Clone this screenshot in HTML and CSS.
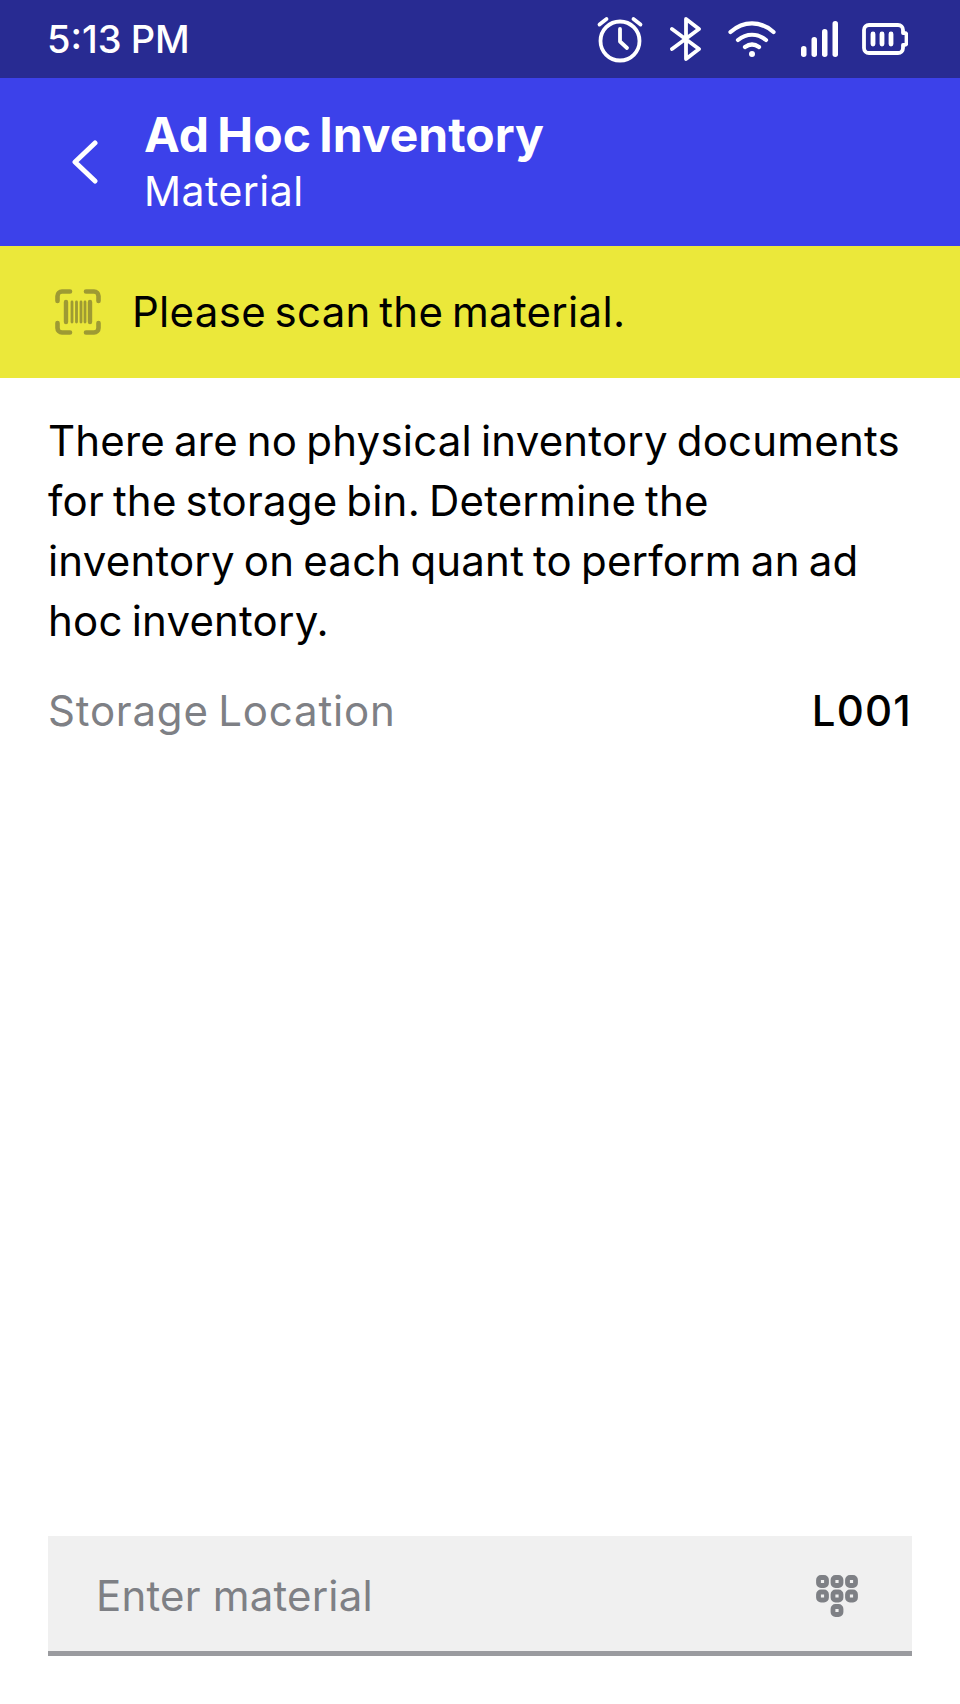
FILE: index.html
```html
<!DOCTYPE html>
<html lang="en">
<head>
    <meta charset="UTF-8">
    <meta name="viewport" content="width=device-width, initial-scale=1.0">
    <title>Ad Hoc Inventory - Material</title>
    <link rel="stylesheet" href="styles.css">
</head>
<body>

<div class="screen">
    <div class="status-bar">
        <span class="time">5:13 PM</span>
        <div class="status-icons">
            <!-- alarm -->
            <svg class="ic-alarm" width="48" height="48" viewBox="0 0 48 48" fill="none" stroke="#fff" stroke-width="3.800" stroke-linecap="round" stroke-linejoin="round">
                <circle cx="24" cy="26" r="19.500"/>
                <path d="M24 14v12.500l7 6.500M3.500 9.500l7-5.500M44.500 9.500l-7-5.500"/>
            </svg>
            <!-- bluetooth -->
            <svg class="ic-bt" width="32" height="44" viewBox="0 0 32 44" fill="none" stroke="#fff" stroke-width="3.800" stroke-linecap="round" stroke-linejoin="round">
                <path d="M2 12l27 20-13 10V2l13 10L2 32"/>
            </svg>
            <!-- wifi -->
            <svg class="ic-wifi" width="48" height="36" viewBox="0 0 48 36" fill="none" stroke="#fff" stroke-width="4.200" stroke-linecap="round">
                <path d="M2.500 11c13-11.500 30-11.500 43 0M10 19c8.500-7 19.500-7 28 0M17 26c4.500-3.200 9.500-3.200 14 0"/>
                <circle cx="24" cy="33" r="3" fill="#fff" stroke="none"/>
            </svg>
            <!-- signal -->
            <svg class="ic-signal" width="37" height="36" viewBox="0 0 37 36" fill="#fff">
                <rect x="0" y="25" width="5.500" height="11" rx="2.700"/>
                <rect x="10.500" y="16" width="5.500" height="20" rx="2.700"/>
                <rect x="21" y="8" width="5.500" height="28" rx="2.700"/>
                <rect x="31.500" y="0" width="5.500" height="36" rx="2.700"/>
            </svg>
            <!-- battery -->
            <svg class="ic-battery" width="46" height="32" viewBox="0 0 46 32" fill="none" stroke="#fff" stroke-linecap="round">
                <path d="M7 2h29a5 5 0 0 1 5 5v3h1.500a2 2 0 0 1 2 2v8a2 2 0 0 1-2 2H41v3a5 5 0 0 1-5 5H7a5 5 0 0 1-5-5V7a5 5 0 0 1 5-5z" stroke-width="3.800" stroke-linejoin="round"/>
                <path d="M11 11v10M20 11v10M29 11v10" stroke-width="4.800"/>
            </svg>
        </div>
    </div>

    <div class="app-bar">
        <svg class="back" width="28" height="44" viewBox="0 0 28 44" fill="none" stroke="#fff" stroke-width="5" stroke-linecap="round" stroke-linejoin="round">
            <path d="M24 3L4 22l20 19"/>
        </svg>
        <div class="titles">
            <div class="title">Ad Hoc Inventory</div>
            <div class="subtitle">Material</div>
        </div>
    </div>

    <div class="banner">
        <svg class="scan" width="46" height="46" viewBox="0 0 46 46" fill="none" stroke="#9e9a33" stroke-width="4.600" stroke-linecap="round">
            <path d="M2.500 12V7a4.500 4.500 0 0 1 4.500-4.500h8M31 2.500h8a4.500 4.500 0 0 1 4.500 4.500v5M2.500 34v5a4.500 4.500 0 0 0 4.500 4.500h8M31 43.500h8a4.500 4.500 0 0 0 4.500-4.500v-5"/>
            <path d="M11 13v20M35 13v20" stroke-width="4.400"/>
            <path d="M17 13v20M21.500 13v20M26 13v20M30 13v20" stroke-width="2.800"/>
        </svg>
        <span class="banner-text">Please scan the material.</span>
    </div>

    <div class="content">
        <p class="intro">There are no physical inventory documents<br>for the storage bin. Determine the<br>inventory on each quant to perform an ad<br>hoc inventory.</p>
        <div class="row">
            <span class="row-label">Storage Location</span>
            <span class="row-value">L001</span>
        </div>
    </div>

    <div class="field">
        <span class="placeholder">Enter material</span>
        <svg class="keypad" width="42" height="42" viewBox="0 0 42 42" fill="none" stroke="#7e8085" stroke-width="4.800">
            <rect x="2.500" y="2.500" width="8" height="8" rx="2.500"/>
            <rect x="17" y="2.500" width="8" height="8" rx="2.500"/>
            <rect x="31.500" y="2.500" width="8" height="8" rx="2.500"/>
            <rect x="2.500" y="17" width="8" height="8" rx="2.500"/>
            <rect x="17" y="17" width="8" height="8" rx="2.500"/>
            <rect x="31.500" y="17" width="8" height="8" rx="2.500"/>
            <rect x="17" y="31.500" width="8" height="8" rx="2.500"/>
        </svg>
    </div>
</div>

</body>
</html>
```

FILE: styles.css
```css
body {
    font-family: Inter, "Noto Sans", sans-serif;
    margin: 0;
    padding: 0;
    background-color: #fff;
}
.screen {
    width: 960px;
    height: 1704px;
    display: flex;
    flex-direction: column;
    overflow: hidden;
}
.status-bar {
    height: 78px;
    background-color: #282b92;
    color: #fff;
    display: flex;
    align-items: center;
    justify-content: space-between;
    padding: 0 52px 0 47px;
    flex-shrink: 0;
}
.time {
    font-size: 38px;
    font-weight: 500;
    word-spacing: -1px;
}
.status-icons {
    display: flex;
    align-items: center;
}
.ic-alarm { margin-right: 26px; }
.ic-bt { margin-right: 26px; }
.ic-wifi { margin-right: 25px; }
.ic-signal { margin-right: 24px; }
.app-bar {
    height: 168px;
    background-color: #3c41ea;
    color: #fff;
    display: flex;
    align-items: center;
    padding: 2px 0 0 71px;
    box-sizing: border-box;
    flex-shrink: 0;
}
.back {
    margin: -2px 45px 0 0;
}
.title {
    font-size: 48px;
    font-weight: 700;
    line-height: 56px;
    word-spacing: -3px;
}
.subtitle {
    font-size: 41px;
    line-height: 56px;
    letter-spacing: 0.45px;
}
.banner {
    height: 132px;
    background-color: #ebe83a;
    display: flex;
    align-items: center;
    padding-left: 55px;
    flex-shrink: 0;
}
.banner-text {
    font-size: 42px;
    letter-spacing: 0.3px;
    word-spacing: -3.5px;
    margin: -1px 0 0 31px;
    color: #000;
}
.content {
    flex: 1;
    padding: 33px 48px 0;
}
.intro {
    margin: 0;
    font-size: 42px;
    line-height: 60px;
    letter-spacing: 0.2px;
    word-spacing: -3px;
    color: #000;
}
.row {
    display: flex;
    justify-content: space-between;
    align-items: center;
    margin-top: 30px;
    font-size: 42px;
    line-height: 60px;
}
.row-label {
    color: #7e8085;
    letter-spacing: 0.8px;
    word-spacing: -3px;
}
.row-value {
    font-weight: 500;
    letter-spacing: 1.2px;
    color: #000;
}
.field {
    height: 109px;
    margin: 0 48px 48px;
    padding: 5px 54px 1px 48px;
    background-color: #f0f0f0;
    border-bottom: 5px solid #9a9b9f;
    display: flex;
    align-items: center;
    justify-content: space-between;
    flex-shrink: 0;
    box-sizing: content-box;
}
.placeholder {
    font-size: 42px;
    letter-spacing: 0.2px;
    color: #7e8085;
}
```
